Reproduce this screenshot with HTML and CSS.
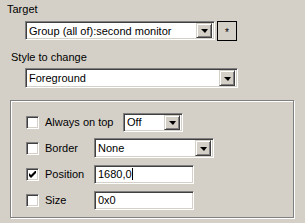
FILE: index.html
```html
<!DOCTYPE html>
<html lang="en">
<head>
  <meta charset="UTF-8" />
  <title>Style settings</title>
  <link rel="stylesheet" href="styles.css">
</head>
<body>
  <div class="panel">
    <div class="label target-label">Target</div>
    <div class="target-row">
      <div class="combo target-combo">
        <span class="value">Group (all of):second monitor</span>
        <span class="drop"><span class="arrow"></span></span>
      </div>
      <div class="star-btn">*</div>
    </div>

    <div class="label style-label">Style to change</div>
    <div class="combo style-combo">
      <span class="value">Foreground</span>
      <span class="drop"><span class="arrow"></span></span>
    </div>

    <div class="group">
      <div class="row">
        <span class="check"></span>
        <span class="row-label wide">Always on top</span>
        <div class="combo small-combo">
          <span class="value">Off</span>
          <span class="drop"><span class="arrow"></span></span>
        </div>
      </div>
      <div class="row">
        <span class="check"></span>
        <span class="row-label">Border</span>
        <div class="combo border-combo">
          <span class="value">None</span>
          <span class="drop"><span class="arrow"></span></span>
        </div>
      </div>
      <div class="row">
        <span class="check checked">
          <svg width="7" height="7" viewBox="0 0 7 7"><path d="M0 2v3l2 2 5-5V-1L2 4z" fill="#000"/></svg>
        </span>
        <span class="row-label">Position</span>
        <div class="field"><span class="value">1680,0<span class="caret"></span></span></div>
      </div>
      <div class="row">
        <span class="check"></span>
        <span class="row-label">Size</span>
        <div class="field"><span class="value">0x0</span></div>
      </div>
    </div>
  </div>
</body>
</html>
```

FILE: styles.css
```css
body {
  margin: 0;
  background-color: #d4d0c8;
  font-family: "Liberation Sans", Arial, sans-serif;
  font-size: 11px;
  color: #000;
}

.panel {
  width: 305px;
  height: 223px;
  padding-top: 2px;
  box-sizing: border-box;
}

.label {
  height: 14px;
  line-height: 14px;
}

.target-label {
  padding-left: 7px;
  margin-bottom: 5px;
}

.style-label {
  padding-left: 11px;
  margin-top: 9px;
  margin-bottom: 4px;
}

.target-row {
  display: flex;
  align-items: flex-start;
  margin-left: 25px;
}

/* sunken field look */
.combo,
.field {
  display: flex;
  align-items: center;
  box-sizing: border-box;
  height: 19px;
  background-color: #fff;
  border: 1px solid;
  border-color: #808080 #fff #fff #808080;
  box-shadow: inset 1px 1px 0 #404040, inset -1px -1px 0 #d4d0c8;
  padding: 2px;
}

.combo .value,
.field .value {
  flex: 1;
  padding-left: 1px;
  line-height: 14px;
  white-space: nowrap;
  overflow: hidden;
}

.drop {
  display: flex;
  align-items: center;
  justify-content: center;
  width: 16px;
  height: 15px;
  box-sizing: border-box;
  background-color: #d4d0c8;
  border: 1px solid;
  border-color: #d4d0c8 #404040 #404040 #d4d0c8;
  box-shadow: inset 1px 1px 0 #fff, inset -1px -1px 0 #808080;
}

.arrow {
  width: 0;
  height: 0;
  border-left: 4px solid transparent;
  border-right: 3px solid transparent;
  border-top: 4px solid #000;
  margin-top: 1px;
}

.target-combo {
  width: 190px;
}

.star-btn {
  width: 20px;
  height: 20px;
  box-sizing: border-box;
  margin-left: 2px;
  padding-top: 2px;
  border: 1px solid #000;
  text-align: center;
  line-height: 18px;
  font-size: 10px;
}

.style-combo {
  width: 213px;
  height: 20px;
  margin-left: 25px;
}

.style-combo .drop {
  height: 16px;
}

.group {
  box-sizing: border-box;
  width: 284px;
  height: 118px;
  margin: 12px 0 0 10px;
  padding: 11px 0 0 15px;
  border: 1px solid #808080;
  box-shadow: 1px 1px 0 #fff, inset 1px 1px 0 #fff;
}

.row {
  display: flex;
  align-items: center;
  height: 20px;
  margin-bottom: 6px;
}

.check {
  display: flex;
  align-items: center;
  justify-content: center;
  width: 13px;
  height: 13px;
  box-sizing: border-box;
  background-color: #fff;
  border: 1px solid;
  border-color: #808080 #fff #fff #808080;
  box-shadow: inset 1px 1px 0 #404040, inset -1px -1px 0 #d4d0c8;
}

.row-label {
  min-width: 46px;
  margin: 0 3px 0 6px;
  white-space: nowrap;
}

.row-label.wide {
  min-width: 75px;
}

.small-combo {
  width: 60px;
}

.border-combo {
  width: 120px;
  height: 20px;
}

.border-combo .drop {
  height: 16px;
}

.field {
  width: 100px;
}

.caret {
  display: inline-block;
  width: 1px;
  height: 12px;
  background-color: #000;
  vertical-align: -2px;
}
```
